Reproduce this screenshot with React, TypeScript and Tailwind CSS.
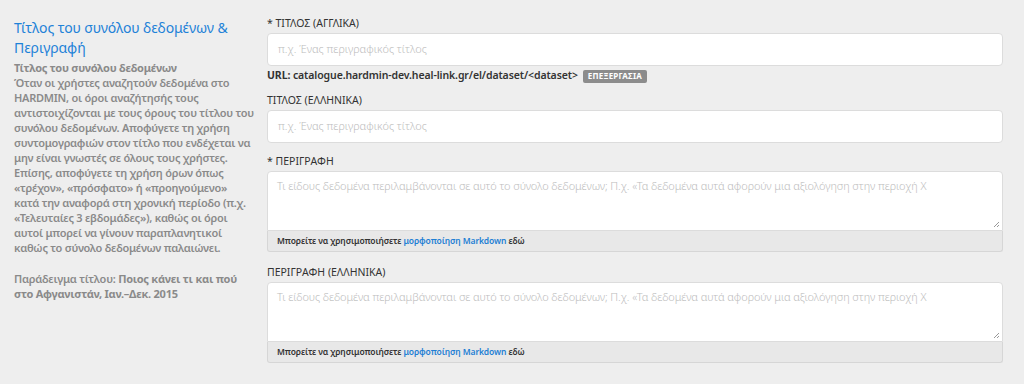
import React from "react";

const font = { fontFamily: '"Noto Sans", "Open Sans", sans-serif' };

function Footer() {
  return (
    <div className="h-[21px] bg-[#e8e8e8] border border-t-0 border-[#d6d6d6] rounded-b-[3px] flex items-center px-[9px] text-[8.5px] tracking-[-0.1px] font-semibold text-[#333]">
      Μπορείτε να χρησιμοποιήσετε&nbsp;<span className="text-[#1e7fd4]">μορφοποίηση Markdown</span>&nbsp;εδώ
    </div>
  );
}

function TextArea() {
  const ph =
    "Τι είδους δεδομένα περιλαμβάνονται σε αυτό το σύνολο δεδομένων; Π.χ. «Τα δεδομένα αυτά αφορούν μια αξιολόγηση στην περιοχή Χ";
  return (
    <div className="w-[736px]">
      <div className="relative h-[60px] bg-white border border-[#dcdcdc] rounded-t-[4px] px-[9px] pt-[6px] text-[11px] tracking-[-0.1px] font-light text-[#bdbdbd] leading-[15px]">
        {ph}
        <svg className="absolute right-[2px] bottom-[2px]" width="8" height="8" viewBox="0 0 8 8">
          <path d="M7 2L2 7M7 5L5 7" stroke="#999" strokeWidth="1" />
        </svg>
      </div>
      <Footer />
    </div>
  );
}

function Input() {
  return (
    <div className="w-[736px] h-[33px] bg-white border border-[#dcdcdc] rounded-[4px] flex items-center px-[10px] text-[11px] font-light text-[#bdbdbd]">
      π.χ. Ένας περιγραφικός τίτλος
    </div>
  );
}

function Label({ children }: { children: React.ReactNode }) {
  return <div className="text-[10.5px] text-[#333] leading-[14px] mb-[3px]">{children}</div>;
}

export default function App() {
  return (
    <div style={font} className="w-[1024px] h-[384px] bg-[#eeeeee] flex overflow-hidden">
      <aside className="w-[256px] shrink-0 pl-[14px] pr-[2px] pt-[18px]">
        <h2 className="text-[14px] leading-[20px] tracking-[-0.1px] text-[#1e82d8] font-normal">
          Τίτλος του συνόλου δεδομένων &amp; Περιγραφή
        </h2>
        <div className="text-[11px] leading-[15px] tracking-[-0.25px] text-[#8a8a8a] font-semibold mt-[2px]">
          <div className="font-bold">Τίτλος του συνόλου δεδομένων</div>
          <p>
            Όταν οι χρήστες αναζητούν δεδομένα στο HARDMIN, οι όροι αναζήτησής τους αντιστοιχίζονται με τους όρους του τίτλου του συνόλου δεδομένων. Αποφύγετε τη χρήση συντομογραφιών στον τίτλο που ενδέχεται να μην είναι γνωστές σε όλους τους χρήστες. Επίσης, αποφύγετε τη χρήση όρων όπως «τρέχον», «πρόσφατο» ή «προηγούμενο» κατά την αναφορά στη χρονική περίοδο (π.χ. «Τελευταίες 3 εβδομάδες»), καθώς οι όροι αυτοί μπορεί να γίνουν παραπλανητικοί καθώς το σύνολο δεδομένων παλαιώνει.
          </p>
          <p className="mt-[16px]">
            Παράδειγμα τίτλου: <b className="font-bold">Ποιος κάνει τι και πού στο Αφγανιστάν, Ιαν.–Δεκ. 2015</b>
          </p>
        </div>
      </aside>
      <main className="pl-[11px] pt-[16px]">
        <Label>* ΤΙΤΛΟΣ (ΑΓΓΛΙΚΑ)</Label>
        <Input />
        <div className="flex items-center mt-[3px] h-[14px] text-[10.5px] tracking-[-0.1px] text-[#333]">
          <span className="font-bold">URL:</span>&nbsp;
          <span className="font-semibold">catalogue.hardmin-dev.heal-link.gr/el/dataset/&lt;dataset&gt;</span>
          <span className="ml-[5px] bg-[#8c8c8c] text-white text-[8px] tracking-[0.2px] font-bold px-[5px] h-[13px] flex items-center rounded-[2px]">
            ΕΠΕΞΕΡΓΑΣΙΑ
          </span>
        </div>
        <div className="mt-[10px]">
          <Label>ΤΙΤΛΟΣ (ΕΛΛΗΝΙΚΑ)</Label>
          <Input />
        </div>
        <div className="mt-[11px]">
          <Label>* ΠΕΡΙΓΡΑΦΗ</Label>
          <TextArea />
        </div>
        <div className="mt-[13px]">
          <Label>ΠΕΡΙΓΡΑΦΗ (ΕΛΛΗΝΙΚΑ)</Label>
          <TextArea />
        </div>
      </main>
    </div>
  );
}
